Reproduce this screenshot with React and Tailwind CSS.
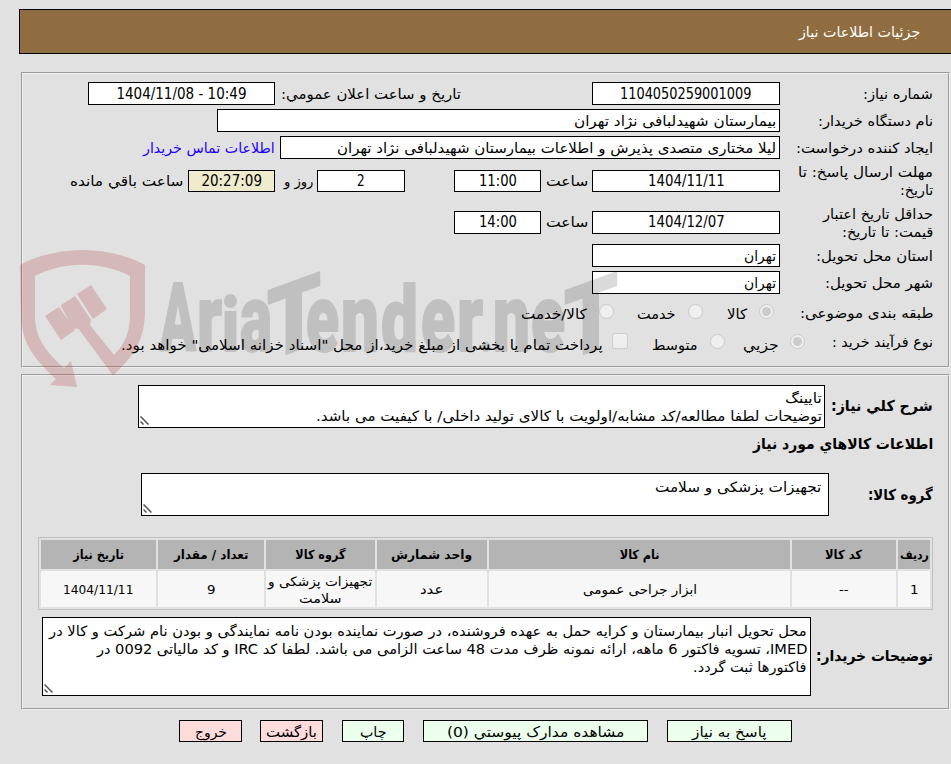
import { useLayoutEffect, useRef, useState } from "react";
import clsx from "clsx";

// A single line of text, stretched or narrowed to fill the width of its box.
function Fit({ className, children }) {
  const outer = useRef(null);
  const inner = useRef(null);
  const [scale, setScale] = useState(1);
  useLayoutEffect(() => {
    const w = inner.current.offsetWidth;
    if (w) setScale(outer.current.clientWidth / w);
  }, []);
  return (
    <span ref={outer} className={clsx("flex shrink-0 whitespace-nowrap", className)}>
      <span ref={inner} className="shrink-0 origin-right" style={{ transform: `scaleX(${scale})` }}>
        {children}
      </span>
    </span>
  );
}

function Field({ className, children }) {
  return (
    <div className={clsx("flex shrink-0 items-center border border-black", className)}>{children}</div>
  );
}

function Row({ className, children }) {
  return <div className={clsx("flex shrink-0 items-center", className)}>{children}</div>;
}

function Label({ children }) {
  return <div className="flex w-[153px] shrink-0 flex-col">{children}</div>;
}

function Radio({ checked, className }) {
  return (
    <span
      className={clsx(
        "flex size-[15px] shrink-0 items-center justify-center rounded-full border border-[#cbcbcb] bg-[#efefef]",
        className
      )}
    >
      {checked && <span className="size-[9px] rounded-full bg-[#cbcbcb]" />}
    </span>
  );
}

function TextArea({ className, children }) {
  return (
    <div className={clsx("relative flex shrink-0 flex-col border border-black bg-white", className)}>
      {children}
      <svg className="absolute bottom-[2px] left-px" width="9" height="9" viewBox="0 0 9 9">
        <path d="M0.5 0.5L8.5 8.5M0.5 5.5L3.5 8.5" stroke="#555" strokeWidth="1.5" fill="none" />
      </svg>
    </div>
  );
}

function Watermark() {
  return (
    <svg className="pointer-events-none absolute left-0 top-[240px]" width="640" height="150" viewBox="0 240 640 150">
      <g opacity="0.25" fill="#b54145">
        <path d="M20 265C57 245 108 245 145 265V310C145 340 134 356 113 375.500L78 328L73 329L61 306L76 298L91 320L90 325L114 355C126 343 130 331 130 314V276C101 261 64 261 35 276V318C36 342 51 356 64 368L71 361L77 387L50 385L56 379C36 361 22 344 21 318Z" />
        <path d="M45 316L59 307L75 330L61 340ZM61 305L75 296L91 320L77 329ZM77 294L91 285L107 309L93 319Z" />
      </g>
      <g
        fill="#000"
        stroke="#000"
        strokeWidth="2"
        strokeLinejoin="round"
        opacity="0.14"
        fontFamily="Roboto, 'Liberation Sans', sans-serif"
        fontWeight="900"
        direction="ltr"
      >
        <text x="160" y="351" fontSize="94" textLength="36" lengthAdjust="spacingAndGlyphs">A</text>
        <text x="197" y="351" fontSize="94" textLength="25" lengthAdjust="spacingAndGlyphs">r</text>
        <text x="222" y="351" fontSize="74" textLength="17" lengthAdjust="spacingAndGlyphs">i</text>
        <text x="240" y="351" fontSize="94" textLength="32" lengthAdjust="spacingAndGlyphs">a</text>
        <text transform="translate(267 352) skewY(-20)" x="0" y="9" fontSize="98" textLength="54" lengthAdjust="spacingAndGlyphs">T</text>
        <text x="306" y="351" fontSize="94" textLength="33" lengthAdjust="spacingAndGlyphs">e</text>
        <text x="341" y="351" fontSize="94" textLength="38" lengthAdjust="spacingAndGlyphs">n</text>
        <text x="381" y="351" fontSize="90" textLength="37" lengthAdjust="spacingAndGlyphs">d</text>
        <text x="421" y="351" fontSize="94" textLength="34" lengthAdjust="spacingAndGlyphs">e</text>
        <text x="457" y="351" fontSize="94" textLength="26" lengthAdjust="spacingAndGlyphs">r</text>
        <text x="480" y="351" fontSize="50" textLength="12" lengthAdjust="spacingAndGlyphs">.</text>
        <text x="493" y="351" fontSize="94" textLength="37" lengthAdjust="spacingAndGlyphs">n</text>
        <text x="531" y="351" fontSize="94" textLength="34" lengthAdjust="spacingAndGlyphs">e</text>
        <text transform="translate(564 352) skewY(-20)" x="0" y="9" fontSize="98" textLength="54" lengthAdjust="spacingAndGlyphs">T</text>
      </g>
    </svg>
  );
}

const columns = [
  { title: "ردیف", titleW: "w-[29px]", value: ["1"], valueW: ["w-[8px]"] },
  { title: "کد کالا", titleW: "w-[37px]", value: ["--"], valueW: ["w-[9px]"] },
  { title: "نام کالا", titleW: "w-[40px]", value: ["ابزار جراحی عمومی"], valueW: ["w-[114px]"] },
  { title: "واحد شمارش", titleW: "w-[81px]", value: ["عدد"], valueW: ["w-[23px]"] },
  { title: "گروه کالا", titleW: "w-[50px]", value: ["تجهیزات پزشکی و", "سلامت"], valueW: ["w-[104px]", "w-[43px]"] },
  { title: "تعداد / مقدار", titleW: "w-[75px]", value: ["9"], valueW: ["w-[8px]"] },
  { title: "تاریخ نیاز", titleW: "w-[51px]", value: ["1404/11/11"], valueW: ["w-[70px]"] },
];

const buttons = [
  { text: "پاسخ به نیاز", box: "w-[125px] bg-[#ecffec]", w: "w-[75px]" },
  { text: "مشاهده مدارک پیوستي (0)", box: "w-[225px] bg-[#ecffec]", w: "w-[177px]" },
  { text: "چاپ", box: "w-[62px] bg-[#ecffec]", w: "w-[26px]" },
  { text: "بازگشت", box: "w-[63px] bg-[#ffdcdc]", w: "w-[51px]" },
  { text: "خروج", box: "-mr-px w-[63px] bg-[#ffdcdc]", w: "w-[32px]" },
];

export default function App() {
  return (
    <div
      dir="rtl"
      className="relative flex h-[764px] w-[951px] flex-col overflow-hidden bg-[#e1e1e1] pt-[9px] font-['DejaVu_Sans_Condensed','DejaVu_Sans',sans-serif] text-[14px] leading-[18px] text-black"
    >
      <div className="ml-[19px] flex h-[45px] shrink-0 items-center border-y border-l border-black bg-[#8f6d40] pr-[31px] text-white">
        <Fit className="w-[121px]">جزئیات اطلاعات نیاز</Fit>
      </div>

      <section className="ml-[21px] mr-px mt-[18px] flex h-[296px] shrink-0 flex-col border-2 border-[#f0f0f0] pr-[15px] [border-style:groove]">
        <Row className="mt-[8px] h-[23px]">
          <Label><Fit className="w-[70px]">شماره نیاز:</Fit></Label>
          <Field className="h-[23px] w-[188px] justify-center bg-white text-[15px]"><Fit className="w-[131px]">1104050259001009</Fit></Field>
          <Fit className="mr-[131px] w-[180px]">تاریخ و ساعت اعلان عمومي:</Fit>
          <Field className="mr-[6px] h-[23px] w-[187px] justify-center bg-white text-[15px]"><Fit className="w-[130px]"><bdo dir="ltr">1404/11/08 - 10:49</bdo></Fit></Field>
        </Row>
        <Row className="mt-[4px] h-[23px]">
          <Label><Fit className="w-[115px]">نام دستگاه خریدار:</Fit></Label>
          <Field className="h-[23px] w-[563px] bg-white pr-[3px]"><Fit className="w-[202px]">بیمارستان شهیدلبافی نژاد تهران</Fit></Field>
        </Row>
        <Row className="mt-[4px] h-[23px]">
          <Label><Fit className="w-[137px]">ایجاد کننده درخواست:</Fit></Label>
          <Field className="h-[23px] w-[500px] bg-white pr-[3px]"><Fit className="w-[439px]">لیلا مختاری متصدی پذیرش و اطلاعات بیمارستان شهیدلبافی نژاد تهران</Fit></Field>
          <Fit className="mr-[5px] w-[132px] text-[#1a00ff]">اطلاعات تماس خریدار</Fit>
        </Row>
        <Row className="mt-[4px] h-[36px]">
          <Label>
            <Fit className="w-[135px]">مهلت ارسال پاسخ: تا</Fit>
            <Fit className="w-[33px]">تاریخ:</Fit>
          </Label>
          <Field className="h-[22px] w-[188px] justify-center bg-white text-[15px]"><Fit className="w-[77px]">1404/11/11</Fit></Field>
          <Fit className="mr-[4px] w-[42px]">ساعت</Fit>
          <Field className="mr-[5px] h-[22px] w-[87px] justify-center bg-white text-[15px]"><Fit className="w-[38px]">11:00</Fit></Field>
          <Field className="mr-[49px] h-[22px] w-[88px] justify-center bg-white text-[15px]"><Fit className="w-[8px]">2</Fit></Field>
          <Fit className="mr-[4px] w-[29px]">روز و</Fit>
          <Field className="mr-[9px] h-[22px] w-[87px] justify-center bg-[#eeeccc] text-[15px]"><Fit className="w-[61px]">20:27:09</Fit></Field>
          <Fit className="mr-[5px] w-[113px]">ساعت باقي مانده</Fit>
        </Row>
        <Row className="mt-[5px] h-[36px]">
          <Label>
            <Fit className="mt-px w-[110px]">حداقل تاریخ اعتبار</Fit>
            <Fit className="w-[91px]">قیمت: تا تاریخ:</Fit>
          </Label>
          <Field className="h-[23px] w-[188px] justify-center bg-white text-[15px]"><Fit className="w-[77px]">1404/12/07</Fit></Field>
          <Fit className="mr-[4px] w-[42px]">ساعت</Fit>
          <Field className="mr-[5px] h-[23px] w-[87px] justify-center bg-white text-[15px]"><Fit className="w-[38px]">14:00</Fit></Field>
        </Row>
        <Row className="mt-[4px] h-[23px]">
          <Label><Fit className="w-[117px]">استان محل تحویل:</Fit></Label>
          <Field className="h-[23px] w-[188px] bg-white pr-[3px]"><Fit className="w-[32px]">تهران</Fit></Field>
        </Row>
        <Row className="mt-[4px] h-[23px]">
          <Label><Fit className="w-[108px]">شهر محل تحویل:</Fit></Label>
          <Field className="h-[23px] w-[188px] bg-white pr-[3px]"><Fit className="w-[32px]">تهران</Fit></Field>
        </Row>
        <Row className="mt-[8px] h-[23px]">
          <Label><Fit className="mb-[2px] w-[133px]">طبقه بندی موضوعی:</Fit></Label>
          <Radio checked className="mb-[4px] mr-[6px]" />
          <Fit className="mr-[12px] w-[20px]">کالا</Fit>
          <Radio className="mb-[4px] mr-[24px]" />
          <Fit className="mr-[12px] w-[39px]">خدمت</Fit>
          <Radio className="mb-[4px] mr-[23px]" />
          <Fit className="mr-[12px] w-[66px]">کالا/خدمت</Fit>
        </Row>
        <Row className="mt-[7px] h-[23px]">
          <Fit className="mb-[3px] w-[101px]">نوع فرآیند خرید :</Fit>
          <Radio checked className="mb-[4px] mr-[27px]" />
          <Fit className="mr-[11px] mt-[2px] w-[36px]">جزیي</Fit>
          <Radio className="mb-[4px] mr-[18px]" />
          <Fit className="mr-[12px] mt-[2px] w-[46px]">متوسط</Fit>
          <span className="mb-[5px] mr-[24px] size-[16px] shrink-0 rounded-[3px] border border-[#cbcbcb] bg-[#efefef]" />
          <Fit className="mr-[9px] mt-[2px] w-[482px]">پرداخت تمام یا بخشی از مبلغ خرید،از محل "اسناد خزانه اسلامی" خواهد بود.</Fit>
        </Row>
      </section>

      <section className="ml-[21px] mr-px mt-[6px] flex h-[336px] shrink-0 flex-col border-2 border-[#f0f0f0] pr-[15px] [border-style:groove]">
        <Row className="mt-[9px] h-[43px]">
          <Fit className="mb-[2px] w-[102px] text-[15px] font-bold">شرح کلي نیاز:</Fit>
          <TextArea className="mr-[6px] h-[43px] w-[687px] pr-[2px] pt-[3px]">
            <Fit className="w-[37px]">تایینگ</Fit>
            <Fit className="w-[506px]">توضیحات لطفا مطالعه/کد مشابه/اولویت با کالای تولید داخلی/ با کیفیت می باشد.</Fit>
          </TextArea>
        </Row>
        <Row className="mt-[6px] h-[20px]">
          <Fit className="mb-px w-[180px] text-[15px] font-bold">اطلاعات کالاهاي مورد نیاز</Fit>
        </Row>
        <Row className="mt-[19px] h-[43px]">
          <Fit className="w-[65px] text-[15px] font-bold">گروه کالا:</Fit>
          <TextArea className="mr-[39px] h-[43px] w-[688px] pr-[7px] pt-[4px]">
            <Fit className="w-[166px]">تجهیزات پزشکی و سلامت</Fit>
          </TextArea>
        </Row>
        <div className="mt-[21px] grid h-[73px] w-[895px] shrink-0 grid-cols-[32px_104px_301px_110px_109px_106px_115px] grid-rows-[29px_36px] content-center justify-center gap-[2px] border border-[#c0c0c0]">
          {columns.map((c) => (
            <div key={c.title} className="flex items-center justify-center bg-[#b4b4b4] text-[12.5px] font-bold">
              <Fit className={c.titleW}>{c.title}</Fit>
            </div>
          ))}
          {columns.map((c) => (
            <div key={c.title} className="flex flex-col items-center justify-center bg-[#f7f7f7] pt-px text-[13px] leading-[17px]">
              {c.value.map((line, i) => (
                <Fit key={line} className={c.valueW[i]}>{line}</Fit>
              ))}
            </div>
          ))}
        </div>
        <Row className="mt-[7px] h-[79px]">
          <Fit className="mb-px w-[117px] text-[15px] font-bold">توضیحات خریدار:</Fit>
          <TextArea className="mr-[5px] h-[79px] w-[769px] pr-[3px] pt-[4px]">
            <Fit className="w-[758px]">محل تحویل انبار بیمارستان و کرایه حمل به عهده فروشنده، در صورت نماینده بودن نامه نمایندگی و بودن نام شرکت و کالا در</Fit>
            <Fit className="w-[710px]">IMED، تسویه فاکتور 6 ماهه، ارائه نمونه ظرف مدت 48 ساعت الزامی می باشد. لطفا کد IRC و کد مالیاتی 0092 در</Fit>
            <Fit className="w-[114px]">فاکتورها ثبت گردد.</Fit>
          </TextArea>
        </Row>
      </section>

      <div className="mr-[159px] mt-[10px] flex shrink-0 gap-[19px]">
        {buttons.map((b) => (
          <button key={b.text} className={clsx("flex h-[22px] shrink-0 items-center justify-center border border-black pt-[2px]", b.box)}>
            <Fit className={b.w}>{b.text}</Fit>
          </button>
        ))}
      </div>

      <Watermark />
    </div>
  );
}
